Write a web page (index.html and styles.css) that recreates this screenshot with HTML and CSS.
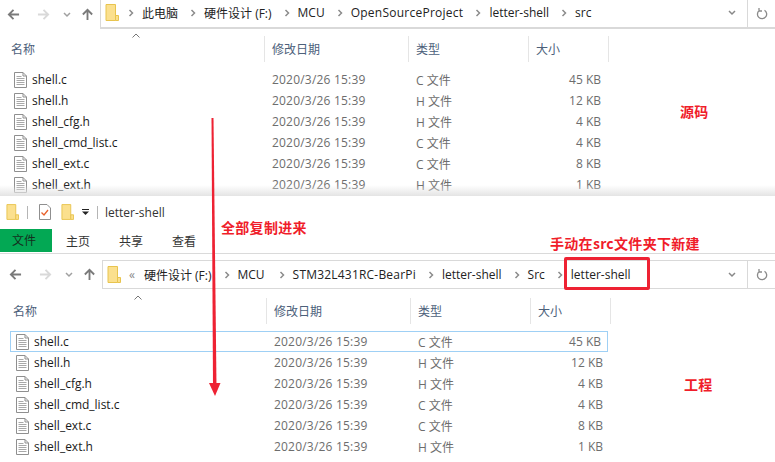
FILE: index.html
```html
<!DOCTYPE html>
<html lang="zh-CN">
<head>
<meta charset="utf-8">
<title>letter-shell</title>
<link rel="stylesheet" href="styles.css">
</head>
<body>
<svg class="defs" width="0" height="0" aria-hidden="true">
  <symbol id="folder" viewBox="0 0 14 17">
    <path d="M1 .5h9.500v16H1z" fill="#fbe08e" stroke="#e8c44e"/>
    <path d="M10.500 11.500h3v5h-3z" fill="#fbe08e" stroke="#e8c44e"/>
  </symbol>
  <symbol id="file" viewBox="0 0 13 16">
    <path d="M.5.5h8.500l3.500 3.500v11.500h-12z" fill="#fff" stroke="#8f8f8f"/>
    <path d="M9 .5v3.500h3.500" fill="none" stroke="#8f8f8f"/>
    <path d="M2.500 4.500h5M2.500 6.500h8M2.500 8.500h8M2.500 10.500h8M2.500 12.500h8" stroke="#a8a8a8" fill="none"/>
  </symbol>
  <symbol id="back" viewBox="0 0 14 14"><path d="M13 7H2M7 2 2 7l5 5" fill="none" stroke="currentColor" stroke-width="2"/></symbol>
  <symbol id="forward" viewBox="0 0 14 14"><path d="M1 7h11M7 2l5 5-5 5" fill="none" stroke="currentColor" stroke-width="2"/></symbol>
  <symbol id="up" viewBox="0 0 14 14"><path d="M7 13V2M2 7l5-5 5 5" fill="none" stroke="currentColor" stroke-width="2"/></symbol>
  <symbol id="down" viewBox="0 0 8 6"><path d="M1 1l3 3 3-3" fill="none" stroke="currentColor" stroke-width="1.500"/></symbol>
  <symbol id="crumb" viewBox="0 0 6 8"><path d="M1.500 1 4.500 4l-3 3" fill="none" stroke="currentColor" stroke-width="1.500"/></symbol>
  <symbol id="refresh" viewBox="0 0 12 14"><path d="M8.500 3.200A4.600 4.600 0 1 1 3.200 3.500M3 1v3h3" fill="none" stroke="currentColor" stroke-width="1.300"/></symbol>
</svg>

<main class="stage">
  <section class="win win-top">
    <div class="nav">
      <div class="nav-buttons">
        <svg class="ic-arrow dark"><use href="#back"/></svg>
        <svg class="ic-arrow light"><use href="#forward"/></svg>
        <svg class="ic-down"><use href="#down"/></svg>
        <svg class="ic-arrow dark"><use href="#up"/></svg>
      </div>
      <div class="address">
        <svg class="ic-folder"><use href="#folder"/></svg>
        <div class="crumbs">
          <svg class="ic-crumb"><use href="#crumb"/></svg><span>此电脑</span>
          <svg class="ic-crumb"><use href="#crumb"/></svg><span>硬件设计 (F:)</span>
          <svg class="ic-crumb"><use href="#crumb"/></svg><span>MCU</span>
          <svg class="ic-crumb"><use href="#crumb"/></svg><span class="wide">OpenSourceProject</span>
          <svg class="ic-crumb"><use href="#crumb"/></svg><span>letter-shell</span>
          <svg class="ic-crumb"><use href="#crumb"/></svg><span>src</span>
        </div>
        <svg class="ic-hist"><use href="#down"/></svg>
        <div class="refresh"><svg class="ic-refresh"><use href="#refresh"/></svg></div>
      </div>
    </div>
    <div class="list">
      <div class="head">
        <span class="col-name">名称<svg class="sort" viewBox="0 0 8 5"><path d="M.5 4.500 4 1l3.500 3.500" fill="none" stroke="#777"/></svg></span>
        <span class="col-date">修改日期</span>
        <span class="col-type">类型</span>
        <span class="col-size">大小</span>
      </div>
      <div class="rows">
        <div class="row"><svg class="ic-file"><use href="#file"/></svg><span class="fname">shell.c</span><span class="date">2020/3/26 15:39</span><span class="type">C 文件</span><span class="size">45 KB</span></div>
        <div class="row"><svg class="ic-file"><use href="#file"/></svg><span class="fname">shell.h</span><span class="date">2020/3/26 15:39</span><span class="type">H 文件</span><span class="size">12 KB</span></div>
        <div class="row"><svg class="ic-file"><use href="#file"/></svg><span class="fname">shell_cfg.h</span><span class="date">2020/3/26 15:39</span><span class="type">H 文件</span><span class="size">4 KB</span></div>
        <div class="row"><svg class="ic-file"><use href="#file"/></svg><span class="fname">shell_cmd_list.c</span><span class="date">2020/3/26 15:39</span><span class="type">C 文件</span><span class="size">4 KB</span></div>
        <div class="row"><svg class="ic-file"><use href="#file"/></svg><span class="fname">shell_ext.c</span><span class="date">2020/3/26 15:39</span><span class="type">C 文件</span><span class="size">8 KB</span></div>
        <div class="row"><svg class="ic-file"><use href="#file"/></svg><span class="fname">shell_ext.h</span><span class="date">2020/3/26 15:39</span><span class="type">H 文件</span><span class="size">1 KB</span></div>
      </div>
    </div>
  </section>

  <section class="win win-bottom">
    <div class="titlebar">
      <svg class="ic-folder qa"><use href="#folder"/></svg>
      <i class="qa-sep"></i>
      <svg class="ic-props" viewBox="0 0 12 16"><path d="M.5.5h7.500l3.500 3.500v11.500H.5z" fill="#fff" stroke="#8f8f8f"/><path d="m2.500 8.500 2.500 2.500 4-5" fill="none" stroke="#e8622c" stroke-width="1.300"/></svg>
      <svg class="ic-folder qa2"><use href="#folder"/></svg>
      <svg class="ic-qamenu" viewBox="0 0 7 6"><path d="M0 .5h7" stroke="#222"/><path d="M0 2.500h7L3.500 6z" fill="#222"/></svg>
      <i class="qa-sep"></i>
      <span class="win-title">letter-shell</span>
    </div>
    <div class="tabs">
      <span class="tab tab-file">文件</span>
      <span class="tab">主页</span>
      <span class="tab">共享</span>
      <span class="tab">查看</span>
    </div>
    <div class="nav nav-b">
      <div class="nav-buttons">
        <svg class="ic-arrow dark"><use href="#back"/></svg>
        <svg class="ic-arrow light"><use href="#forward"/></svg>
        <svg class="ic-down"><use href="#down"/></svg>
        <svg class="ic-arrow dark"><use href="#up"/></svg>
      </div>
      <div class="address">
        <svg class="ic-folder"><use href="#folder"/></svg>
        <div class="crumbs">
          <span class="chev">«</span><span>硬件设计 (F:)</span>
          <svg class="ic-crumb"><use href="#crumb"/></svg><span class="mcu">MCU</span>
          <svg class="ic-crumb"><use href="#crumb"/></svg><span class="stm">STM32L431RC-BearPi</span>
          <svg class="ic-crumb"><use href="#crumb"/></svg><span>letter-shell</span>
          <svg class="ic-crumb"><use href="#crumb"/></svg><span>Src</span>
          <svg class="ic-crumb"><use href="#crumb"/></svg><span>letter-shell</span>
        </div>
        <svg class="ic-hist"><use href="#down"/></svg>
        <div class="refresh"><svg class="ic-refresh"><use href="#refresh"/></svg></div>
      </div>
    </div>
    <div class="list list-b">
      <div class="head">
        <span class="col-name">名称<svg class="sort" viewBox="0 0 8 5"><path d="M.5 4.500 4 1l3.500 3.500" fill="none" stroke="#777"/></svg></span>
        <span class="col-date">修改日期</span>
        <span class="col-type">类型</span>
        <span class="col-size">大小</span>
      </div>
      <div class="rows">
        <div class="row selected"><svg class="ic-file"><use href="#file"/></svg><span class="fname">shell.c</span><span class="date">2020/3/26 15:39</span><span class="type">C 文件</span><span class="size">45 KB</span></div>
        <div class="row"><svg class="ic-file"><use href="#file"/></svg><span class="fname">shell.h</span><span class="date">2020/3/26 15:39</span><span class="type">H 文件</span><span class="size">12 KB</span></div>
        <div class="row"><svg class="ic-file"><use href="#file"/></svg><span class="fname">shell_cfg.h</span><span class="date">2020/3/26 15:39</span><span class="type">H 文件</span><span class="size">4 KB</span></div>
        <div class="row"><svg class="ic-file"><use href="#file"/></svg><span class="fname">shell_cmd_list.c</span><span class="date">2020/3/26 15:39</span><span class="type">C 文件</span><span class="size">4 KB</span></div>
        <div class="row"><svg class="ic-file"><use href="#file"/></svg><span class="fname">shell_ext.c</span><span class="date">2020/3/26 15:39</span><span class="type">C 文件</span><span class="size">8 KB</span></div>
        <div class="row"><svg class="ic-file"><use href="#file"/></svg><span class="fname">shell_ext.h</span><span class="date">2020/3/26 15:39</span><span class="type">H 文件</span><span class="size">1 KB</span></div>
      </div>
    </div>
  </section>

  <svg class="arrow" viewBox="0 0 16 280"><path d="M5.500 0h2L10.500 268H7z" fill="#ee2233"/><path d="M3 265h11.500L9 278z" fill="#ee2233"/></svg>
  <div class="redbox"></div>
  <span class="note note-src">源码</span>
  <span class="note note-copy">全部复制进来</span>
  <span class="note note-new">手动在src文件夹下新建</span>
  <span class="note note-proj">工程</span>
</main>
</body>
</html>
```

FILE: styles.css
```css
* { box-sizing: border-box; }
html, body { margin: 0; padding: 0; background: #fff; }
body { font-family: "Open Sans", "Noto Sans CJK SC", sans-serif; font-size: 12px; color: #1a1a1a; }
.defs { position: absolute; }
.stage { position: relative; width: 775px; height: 462px; overflow: hidden; }
svg { display: block; flex: none; }

.win-top { height: 196px; overflow: hidden; position: relative; }
.win-top::after { content: ""; position: absolute; left: 0; right: 0; bottom: 0; height: 11px; background: linear-gradient(#ffffff00, #e4e4e4); }
.win-bottom { height: 266px; padding-top: 1px; }

.nav { display: flex; height: 29px; }
.nav-buttons { width: 100px; display: flex; align-items: center; padding-left: 7px; }
.ic-arrow { width: 13px; height: 13px; }
.ic-arrow.dark { color: #7a7a7a; }
.ic-arrow.light { color: #d9d9d9; margin-left: 17px; }
.ic-down { width: 8px; height: 6px; color: #a0a0a0; margin: 0 10px 0 13px; }
.address { flex: 1; display: flex; align-items: center; border-left: 1px solid #d9d9d9; border-bottom: 2px solid #d9d9d9; padding-left: 4px; padding-bottom: 2px; }
.ic-folder { width: 14px; height: 17px; }
.crumbs { flex: 1; display: flex; align-items: center; font-size: 12px; color: #222; padding-left: 9px; white-space: nowrap; }
.ic-crumb { width: 6px; height: 8px; color: #8c8c8c; margin: 0 8px 0 0; }
.crumbs span { margin-right: 12px; }
.crumbs .wide { letter-spacing: .25px; }
.crumbs .stm { letter-spacing: .2px; }
.crumbs .mcu { margin-right: 14px; }
.ic-hist { width: 8px; height: 6px; color: #888; margin-right: 11px; }
.refresh { width: 28px; align-self: stretch; margin-bottom: -2px; border-left: 1px solid #d9d9d9; display: flex; align-items: center; justify-content: center; color: #8a8a8a; }
.ic-refresh { width: 12px; height: 14px; }

.list { padding-top: 7px; }
.head { display: grid; grid-template-columns: 265px 144px 120px 80px; height: 26px; align-items: stretch; color: #4c607a; }
.head span { display: flex; align-items: center; padding-left: 7px; position: relative; border-right: 1px solid #e5e5e5; }
.head .col-name { padding-left: 11px; }
.sort { position: absolute; left: 132px; top: -3px; width: 8px; height: 5px; }
.rows { padding-top: 7px; }
.row { display: grid; grid-template-columns: 14px 233px 144px 120px 77px; align-items: center; height: 21px; padding-left: 13px; color: #6d6d6d; }
.ic-file { width: 13px; height: 16px; margin-left: 1px; }
.fname { color: #1a1a1a; padding-left: 5px; white-space: nowrap; }
.date { padding-left: 12px; white-space: nowrap; letter-spacing: .2px; }
.type { padding-left: 12px; white-space: nowrap; }
.size { text-align: right; white-space: nowrap; }

.titlebar { display: flex; align-items: center; height: 30px; padding-left: 6px; }
.titlebar .qa { width: 13px; height: 16px; }
.qa-sep { width: 1px; height: 13px; background: #b5b5b5; margin: 0 11px 0 8px; }
.ic-props { width: 12px; height: 16px; }
.qa2 { margin-left: 10px; }
.titlebar .qa2 { width: 13px; height: 16px; }
.ic-qamenu { width: 7px; height: 6px; margin-left: 8px; }
.titlebar .ic-qamenu + .qa-sep { margin-right: 7px; margin-left: 8px; }
.win-title { color: #333; }
.tabs { display: flex; height: 24px; align-items: center; margin-top: 1px; color: #333; padding-top: 1px; }
.tab { width: 52px; text-align: center; margin-right: 1px; }
.tab-file { background: #03a854; color: #14301e; height: 23px; line-height: 23px; margin: -1px 0 0; padding-right: 4px; }
.nav-b { height: 36px; border-top: 1px solid #dadada; margin-top: 1px; padding-top: 6px; }
.nav-b .nav-buttons { width: 102px; padding-left: 9px; }
.nav-b .address { border: 1px solid #d9d9d9; border-right: 0; padding-bottom: 0; }
.nav-b .refresh { margin-bottom: 0; }
.crumbs .chev { color: #888; margin-right: 9px; }
.nav-b .crumbs { padding-left: 8px; }
.list-b { padding-top: 9px; padding-left: 2px; }
.row.selected { outline: 1px solid #9fd0f5; outline-offset: -1px; margin-left: 8px; padding-left: 5px; width: 598px; grid-template-columns: 14px 233px 144px 120px 75px; }

.arrow { position: absolute; left: 206px; top: 118px; width: 16px; height: 280px; }
.redbox { position: absolute; left: 564px; top: 257px; width: 86px; height: 33px; border: 3px solid #ee2233; border-radius: 2px; }
.note { position: absolute; color: #f01d2a; font-weight: 700; font-size: 14px; line-height: 16px; letter-spacing: .3px; font-family: "Noto Sans CJK SC", sans-serif; white-space: nowrap; }
.note-src { left: 680px; top: 103px; }
.note-copy { left: 221px; top: 219px; }
.note-new { left: 550px; top: 235px; }
.note-proj { left: 684px; top: 376px; }
```
